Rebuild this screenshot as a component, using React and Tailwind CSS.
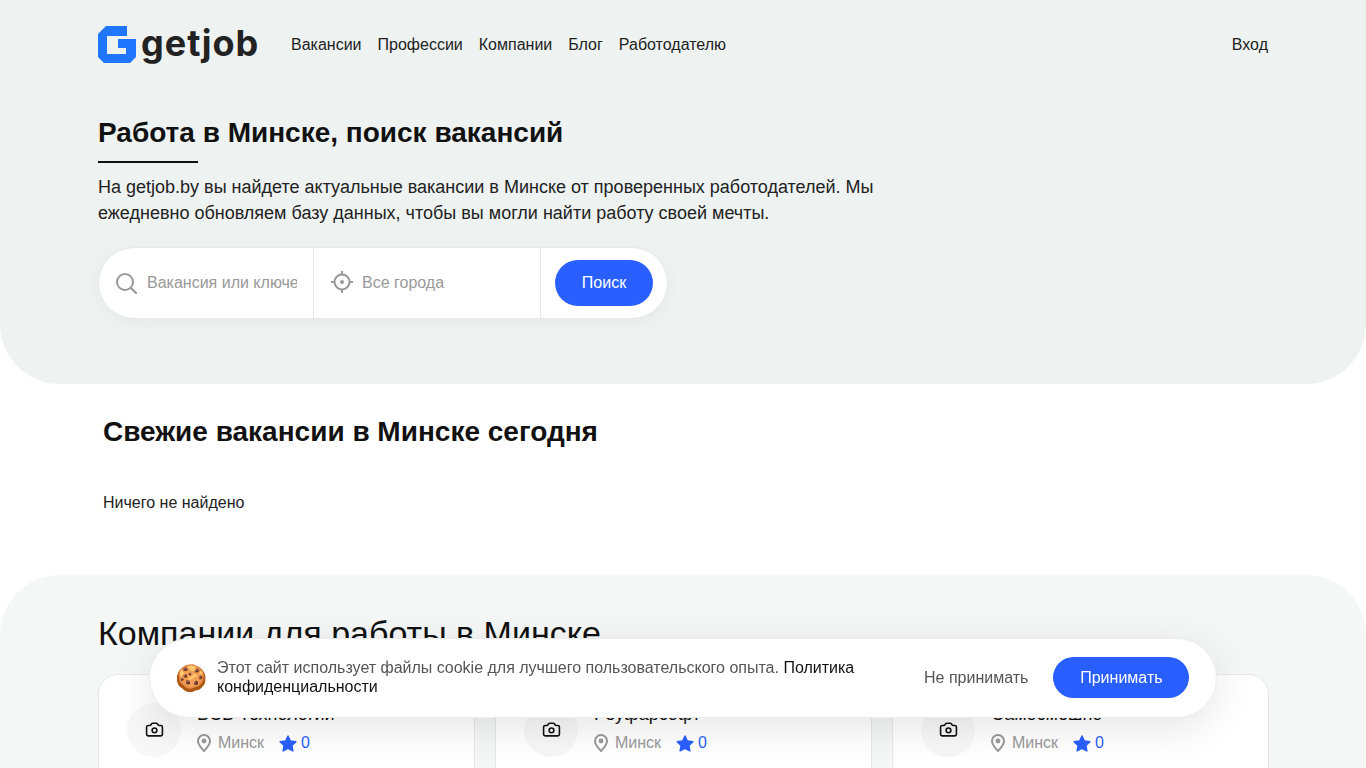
import React from "react";
import { Camera } from "lucide-react";

const navLinks = ["Вакансии", "Профессии", "Компании", "Блог", "Работодателю"];
const companies = ["BCB Технологии", "Реуфарсофт", "Самосмешно"];

const Logo = () => (
  <div className="flex items-center gap-[5px]">
    <svg width="38" height="38" viewBox="0 0 38 38">
      <path
        d="M8 0H29V10H9V28H28V22H20V13H38V31L32 37H6L0 31V8Z"
        fill="#2176ff"
      />
    </svg>
    <span className="w-[117px] font-['Inter',sans-serif] text-[36px] font-bold leading-none tracking-[1px] text-[#222] pb-[4px]">
      getjob
    </span>
  </div>
);

const PinIcon = () => (
  <svg width="14" height="18" viewBox="0 0 14 18" className="mr-[7px] shrink-0">
    <path
      d="M7 1C3.7 1 1 3.6 1 6.9C1 10.8 4.6 14.3 7 17C9.4 14.3 13 10.8 13 6.9C13 3.6 10.3 1 7 1Z"
      fill="none"
      stroke="#999"
      strokeWidth="2"
      strokeLinejoin="round"
    />
    <circle cx="7" cy="7" r="2.4" fill="#999" />
  </svg>
);

const StarIcon = () => (
  <svg width="18" height="17" viewBox="0 0 18 17" className="ml-[15px] mr-[4px] shrink-0">
    <path
      d="M9 1L11.4 6L16.9 6.7L12.9 10.5L13.9 16L9 13.3L4.1 16L5.1 10.5L1.1 6.7L6.6 6Z"
      fill="#2a5fff"
      stroke="#2a5fff"
      strokeWidth="1.4"
      strokeLinejoin="round"
    />
  </svg>
);

const SearchIcon = () => (
  <svg width="21" height="21" viewBox="0 0 21 21" className="mr-[10px] shrink-0">
    <circle cx="9" cy="9" r="8" fill="none" stroke="#999" strokeWidth="2" />
    <path d="M15 15L20 20" stroke="#999" strokeWidth="2.2" strokeLinecap="round" />
  </svg>
);

const TargetIcon = () => (
  <svg width="22" height="22" viewBox="0 0 22 22" className="mr-[9px] mb-[2px] shrink-0">
    <circle cx="11" cy="11" r="7.5" fill="none" stroke="#999" strokeWidth="2" />
    <circle cx="11" cy="11" r="2" fill="#999" />
    <path d="M11 0V4M11 18V22M0 11H4M18 11H22" stroke="#999" strokeWidth="2" />
  </svg>
);

const CompanyCard = ({ name }) => (
  <div className="flex h-[180px] gap-4 rounded-[20px] border border-[#e5e7eb] bg-white px-[28px] pt-[28px]">
    <div className="flex h-[54px] w-[54px] shrink-0 items-center justify-center rounded-full bg-[#f7f7f7]">
      <Camera size={19} strokeWidth={2} className="mb-[1px] text-[#111]" />
    </div>
    <div>
      <p className="-mt-[1px] text-[18px] leading-[24px] text-[#111]">{name}</p>
      <div className="mt-[5px] flex items-center text-[16px] leading-[24px]">
        <PinIcon />
        <span className="text-[#999]">Минск</span>
        <StarIcon />
        <span className="text-[#2a5fff]">0</span>
      </div>
    </div>
  </div>
);

const CookieBanner = () => (
  <div className="fixed bottom-[50px] left-[149px] flex h-[80px] w-[1068px] items-center rounded-[40px] border border-[#ececec] bg-white pl-[25px] pr-[27px] shadow-[0_10px_40px_rgba(0,0,0,0.1)]">
    <span className="mb-[1px] mr-[14px] w-[28px] shrink-0 text-[26px] leading-none">🍪</span>
    <p className="mb-[2px] w-[660px] shrink-0 text-[16px] leading-[19px] text-[#555]">
      Этот сайт использует файлы cookie для лучшего пользовательского опыта.{" "}
      <span className="text-[#111]">Политика конфиденциальности</span>
    </p>
    <button className="ml-[47px] shrink-0 whitespace-nowrap text-[16px] text-[#555]">Не принимать</button>
    <button className="mb-[1px] ml-[25px] h-[41px] w-[136px] shrink-0 rounded-full bg-[#2a5fff] text-[16px] text-white">
      Принимать
    </button>
  </div>
);

export default function App() {
  return (
    <div className="h-screen overflow-hidden bg-white font-['Liberation_Sans',Arial,sans-serif] text-[#222]">
      <section className="h-[384px] rounded-b-[60px] bg-[#eef2f1] px-[98px]">
        <header className="flex h-[89px] items-center justify-between">
          <div className="flex items-center gap-[33px]">
            <Logo />
            <nav className="flex gap-4 text-[16px]">
              {navLinks.map((link) => (
                <a key={link} href="#">{link}</a>
              ))}
            </nav>
          </div>
          <a href="#" className="text-[16px]">Вход</a>
        </header>

        <h1 className="mt-[27px] text-[28px] font-bold leading-[34px] text-[#111]">
          Работа в Минске, поиск вакансий
        </h1>
        <div className="mt-[11px] h-[2px] w-[100px] bg-[#111]" />
        <p className="mt-[11px] w-[800px] text-[18px] leading-[26px]">
          На getjob.by вы найдете актуальные вакансии в Минске от проверенных работодателей. Мы ежедневно обновляем базу данных, чтобы вы могли найти работу своей мечты.
        </p>

        <div className="mt-[21px] flex h-[72px] w-[570px] items-center rounded-full border border-[#e5e9e9] bg-white shadow-[0_4px_20px_rgba(0,0,0,0.04)]">
          <div className="flex h-full w-[215px] items-center border-r border-[#e5e9e9] pl-[17px] pr-[16px]">
            <SearchIcon />
            <input
              placeholder="Вакансия или ключевое слово"
              className="w-full min-w-0 text-[16px] outline-none placeholder:text-[#999]"
            />
          </div>
          <div className="flex h-full w-[227px] items-center border-r border-[#e5e9e9] pl-[17px] pr-[15px]">
            <TargetIcon />
            <input
              placeholder="Все города"
              className="w-full min-w-0 text-[16px] outline-none placeholder:text-[#999]"
            />
          </div>
          <button className="ml-[14px] h-[46px] w-[98px] rounded-full bg-[#2a5fff] text-[16px] text-white">
            Поиск
          </button>
        </div>
      </section>

      <section className="h-[191px] px-[103px]">
        <h2 className="pt-[30px] text-[28px] font-bold leading-[36px] text-[#111]">
          Свежие вакансии в Минске сегодня
        </h2>
        <p className="mt-[43px] text-[16px] leading-[20px]">Ничего не найдено</p>
      </section>

      <section className="h-[400px] rounded-t-[60px] bg-[#f4f7f6] pl-[98px] pr-[97px] pt-[38px]">
        <h2 className="text-[34px] leading-[40px] text-[#111]">Компании для работы в Минске</h2>
        <div className="mt-[21px] grid grid-cols-3 gap-[20px]">
          {companies.map((name) => (
            <CompanyCard key={name} name={name} />
          ))}
        </div>
      </section>

      <CookieBanner />
    </div>
  );
}
